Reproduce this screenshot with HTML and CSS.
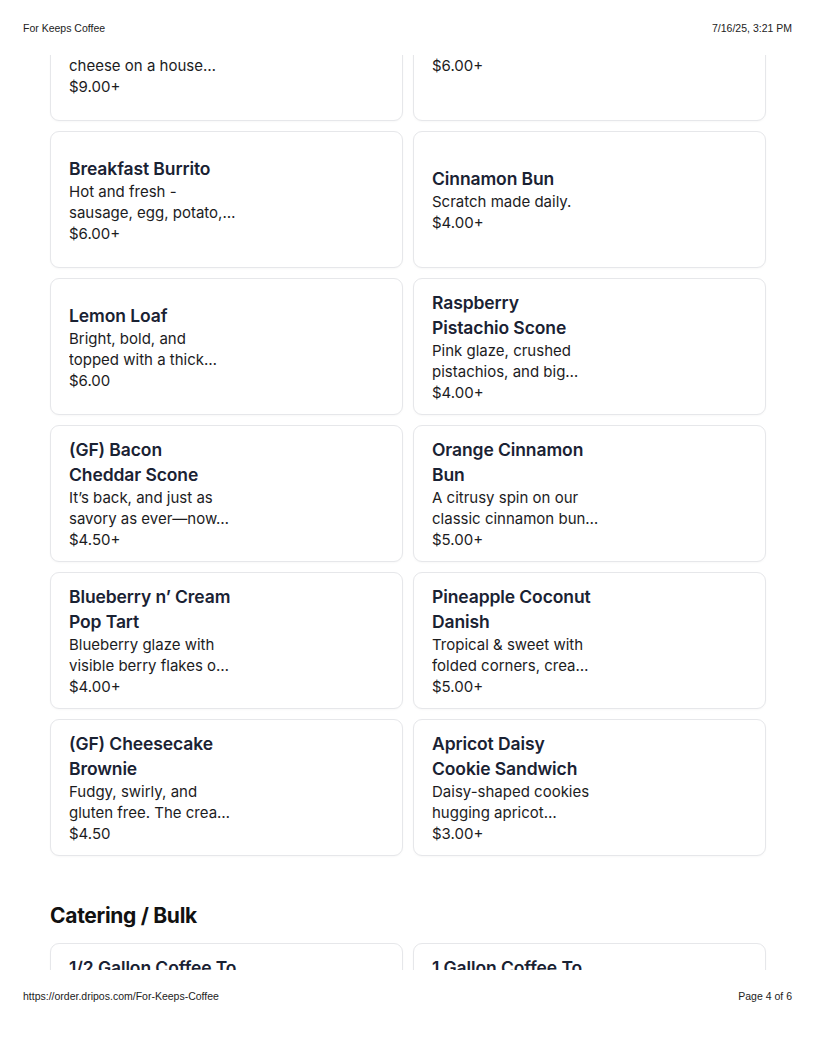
FILE: index.html
```html
<!DOCTYPE html>
<html lang="en">
<head>
    <meta charset="UTF-8">
    <meta name="viewport" content="width=device-width, initial-scale=1.0">
    <title>For Keeps Coffee</title>
    <link rel="stylesheet" href="styles.css">
</head>
<body>
    <div class="print-header">
        <span>For Keeps Coffee</span>
        <span>7/16/25, 3:21 PM</span>
    </div>

    <div class="sheet">
        <div class="menu">
            <div class="item-grid first-grid">
                <div class="item-card">
                    <div class="item-info">
                        <h3 class="item-name">Egg Sandwich</h3>
                        <p class="item-desc">Fried egg and cheddar cheese on a house…</p>
                        <p class="item-price">$9.00+</p>
                    </div>
                </div>
                <div class="item-card">
                    <div class="item-info">
                        <h3 class="item-name">Avocado Toast</h3>
                        <p class="item-price">$6.00+</p>
                    </div>
                </div>

                <div class="item-card">
                    <div class="item-info">
                        <h3 class="item-name">Breakfast Burrito</h3>
                        <p class="item-desc">Hot and fresh - sausage, egg, potato,…</p>
                        <p class="item-price">$6.00+</p>
                    </div>
                </div>
                <div class="item-card">
                    <div class="item-info">
                        <h3 class="item-name">Cinnamon Bun</h3>
                        <p class="item-desc">Scratch made daily.</p>
                        <p class="item-price">$4.00+</p>
                    </div>
                </div>

                <div class="item-card">
                    <div class="item-info">
                        <h3 class="item-name">Lemon Loaf</h3>
                        <p class="item-desc">Bright, bold, and topped with a thick…</p>
                        <p class="item-price">$6.00</p>
                    </div>
                </div>
                <div class="item-card">
                    <div class="item-info">
                        <h3 class="item-name">Raspberry Pistachio Scone</h3>
                        <p class="item-desc">Pink glaze, crushed pistachios, and big…</p>
                        <p class="item-price">$4.00+</p>
                    </div>
                </div>

                <div class="item-card">
                    <div class="item-info">
                        <h3 class="item-name">(GF) Bacon Cheddar Scone</h3>
                        <p class="item-desc">It’s back, and just as savory as ever—now…</p>
                        <p class="item-price">$4.50+</p>
                    </div>
                </div>
                <div class="item-card">
                    <div class="item-info">
                        <h3 class="item-name">Orange Cinnamon Bun</h3>
                        <p class="item-desc">A citrusy spin on our classic cinnamon bun…</p>
                        <p class="item-price">$5.00+</p>
                    </div>
                </div>

                <div class="item-card">
                    <div class="item-info">
                        <h3 class="item-name">Blueberry n’ Cream Pop Tart</h3>
                        <p class="item-desc">Blueberry glaze with visible berry flakes o…</p>
                        <p class="item-price">$4.00+</p>
                    </div>
                </div>
                <div class="item-card">
                    <div class="item-info">
                        <h3 class="item-name">Pineapple Coconut Danish</h3>
                        <p class="item-desc">Tropical &amp; sweet with folded corners, crea…</p>
                        <p class="item-price">$5.00+</p>
                    </div>
                </div>

                <div class="item-card">
                    <div class="item-info">
                        <h3 class="item-name">(GF) Cheesecake Brownie</h3>
                        <p class="item-desc">Fudgy, swirly, and gluten free. The crea…</p>
                        <p class="item-price">$4.50</p>
                    </div>
                </div>
                <div class="item-card">
                    <div class="item-info">
                        <h3 class="item-name">Apricot Daisy Cookie Sandwich</h3>
                        <p class="item-desc">Daisy-shaped cookies hugging apricot…</p>
                        <p class="item-price">$3.00+</p>
                    </div>
                </div>
            </div>

            <h2 class="section-title">Catering / Bulk</h2>

            <div class="item-grid">
                <div class="item-card">
                    <div class="item-info">
                        <h3 class="item-name">1/2 Gallon Coffee To Go</h3>
                        <p class="item-desc">Serves about 8 cups of our house drip…</p>
                        <p class="item-price">$25.00+</p>
                    </div>
                </div>
                <div class="item-card">
                    <div class="item-info">
                        <h3 class="item-name">1 Gallon Coffee To Go</h3>
                        <p class="item-desc">Serves about 16 cups of our house drip…</p>
                        <p class="item-price">$45.00+</p>
                    </div>
                </div>
            </div>
        </div>
    </div>

    <div class="print-footer">
        <span>https://order.dripos.com/For-Keeps-Coffee</span>
        <span>Page 4 of 6</span>
    </div>
</body>
</html>
```

FILE: styles.css
```css
* {
    margin: 0;
    padding: 0;
    box-sizing: border-box;
}

body {
    width: 816px;
    height: 1056px;
    overflow: hidden;
    background: #fff;
    font-family: Inter, 'Noto Sans', sans-serif;
    color: #1c1c1e;
}

/* browser print header / footer */
.print-header,
.print-footer {
    display: flex;
    justify-content: space-between;
    padding: 0 24px 0 23px;
    font-family: 'Liberation Sans', Arial, sans-serif;
    font-size: 10.5px;
    line-height: 12px;
    color: #222;
}

.print-header {
    height: 55px;
    padding-top: 22px;
}

.print-footer {
    height: 86px;
    padding-top: 20px;
}

.sheet {
    height: 915px;
    overflow: hidden;
}

.menu {
    padding: 0 50px;
}

.item-grid {
    display: grid;
    grid-template-columns: repeat(2, 353px);
    gap: 10px;
}

.first-grid {
    margin-top: -71px;
}

.item-card {
    height: 137px;
    display: flex;
    align-items: center;
    padding: 0 18px;
    border: 1px solid #e6e7ea;
    border-radius: 9px;
    background: #fff;
    box-shadow: 0 1px 2px rgba(0, 0, 0, 0.03);
}

.item-info {
    width: 170px;
}

.item-name {
    max-width: 168px;
    font-size: 17.5px;
    font-weight: 600;
    line-height: 25px;
    color: #1a2233;
    letter-spacing: -0.1px;
}

.item-desc {
    max-width: 168px;
    font-size: 15px;
    line-height: 21px;
    color: #1c1c1e;
    display: -webkit-box;
    -webkit-line-clamp: 2;
    -webkit-box-orient: vertical;
    overflow: hidden;
}

.item-price {
    font-size: 15px;
    line-height: 21px;
    color: #1c1c1e;
}

.section-title {
    font-size: 21px;
    font-weight: 700;
    line-height: 28px;
    color: #111;
    letter-spacing: -0.3px;
    margin: 46px 0 13px;
}
```
